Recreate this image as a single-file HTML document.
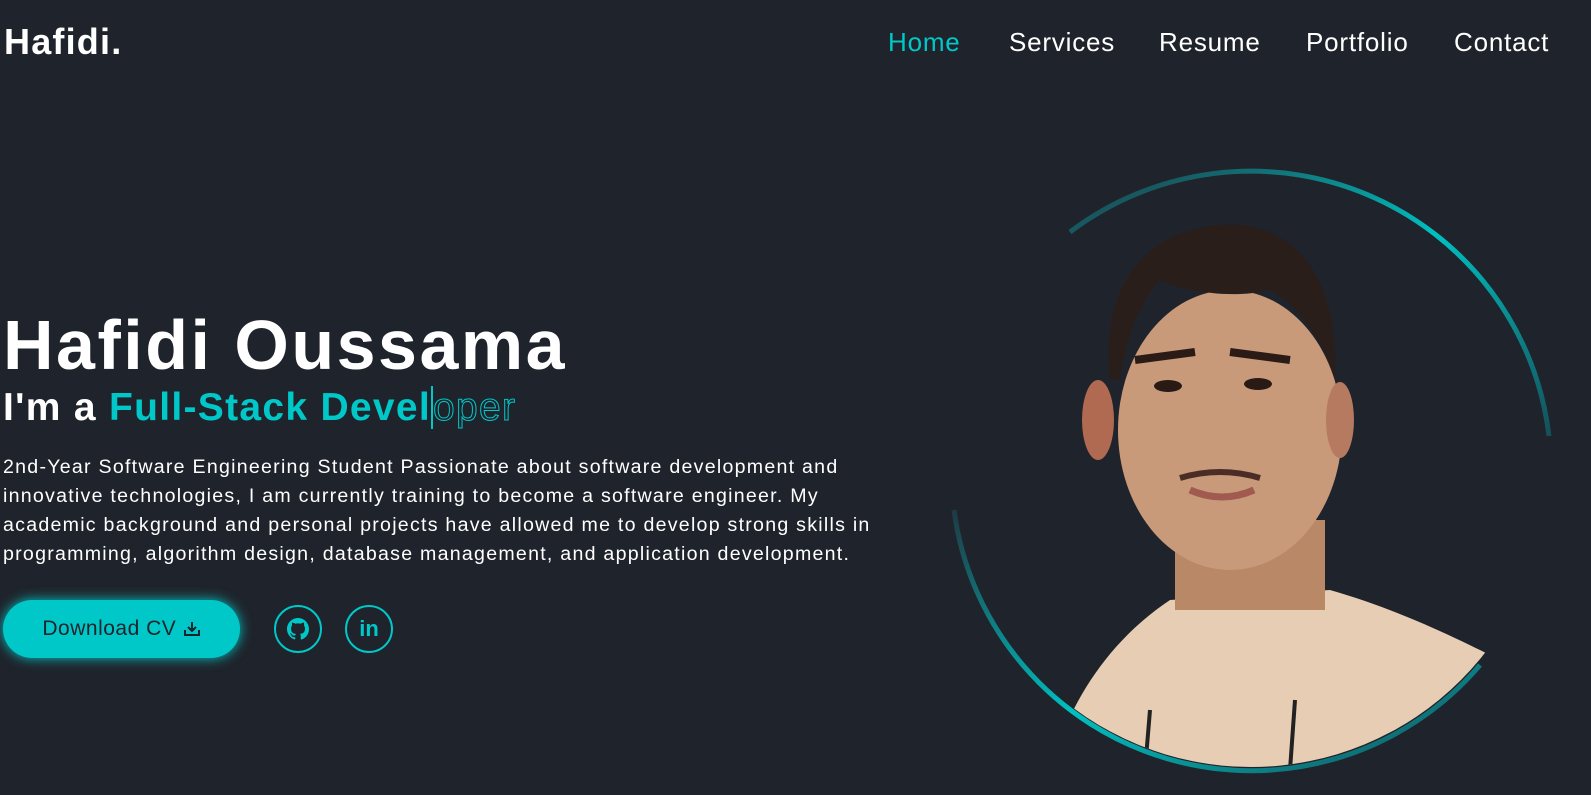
<!DOCTYPE html>
<html><head><meta charset="utf-8"><style>
*{margin:0;padding:0;box-sizing:border-box}
body{width:1591px;height:795px;background:#1f232b;color:#fff;font-family:"Liberation Sans",sans-serif;position:relative;overflow:hidden}
.logo{position:absolute;left:4px;top:21px;font-size:36px;font-weight:bold;letter-spacing:1.2px}
nav a{position:absolute;top:27px;font-size:26px;color:#fff;text-decoration:none;letter-spacing:0.8px}
h1{position:absolute;left:3px;top:305px;font-size:70px;font-weight:bold;letter-spacing:2.5px}
h2{position:absolute;left:3px;top:386px;font-size:39px;font-weight:bold;white-space:nowrap;letter-spacing:1.3px}
h2 .c{color:#00c8c8}
h2 .o{color:transparent;-webkit-text-stroke:1px #00c8c8;font-weight:normal;border-left:2px solid #00c8c8}
p{position:absolute;left:3px;top:453px;font-size:19.6px;line-height:29px;letter-spacing:1.25px;white-space:nowrap}
.btn{position:absolute;left:3px;top:600px;width:237px;height:58px;border-radius:29px;background:#00c8c8;color:#1f232b;font-size:21px;display:flex;align-items:center;justify-content:center;box-shadow:0 0 12px #00c8c8;letter-spacing:0.5px}
.ic{position:absolute;top:605px;width:48px;height:48px;border:2px solid #00c8c8;border-radius:50%;color:#00c8c8;display:flex;align-items:center;justify-content:center;font-weight:bold;font-size:22px}
</style></head><body>
<div class="logo">Hafidi.</div>
<nav><a style="left:888px;color:#00c8c8">Home</a><a style="left:1009px">Services</a><a style="left:1159px">Resume</a><a style="left:1306px">Portfolio</a><a style="left:1454px">Contact</a></nav>
<h1>Hafidi Oussama</h1>
<h2>I'm a <span class="c">Full-Stack Devel</span><span class="o">oper</span></h2>
<p>2nd-Year Software Engineering Student Passionate about software development and<br>innovative technologies, I am currently training to become a software engineer. My<br>academic background and personal projects have allowed me to develop strong skills in<br>programming, algorithm design, database management, and application development.</p>
<div class="btn">Download CV&nbsp;<svg width="18" height="16" viewBox="0 0 18 16" fill="none" stroke="#1f232b" stroke-width="2"><path d="M9 1v9M5 6l4 4 4-4M2 9v5h14V9"/></svg></div>
<div class="ic" style="left:274px"><svg width="22" height="22" viewBox="0 0 16 16" fill="#00c8c8"><path d="M8 0C3.58 0 0 3.58 0 8c0 3.54 2.29 6.53 5.47 7.59.4.07.55-.17.55-.38v-1.33c-2.23.48-2.7-1.07-2.7-1.07-.36-.92-.89-1.17-.89-1.17-.73-.5.06-.49.06-.49.8.06 1.23.83 1.23.83.71 1.22 1.87.87 2.33.66.07-.52.28-.87.51-1.07-1.78-.2-3.64-.89-3.64-3.95 0-.87.31-1.59.82-2.15-.08-.2-.36-1.02.08-2.12 0 0 .67-.21 2.2.82a7.6 7.6 0 0 1 4 0c1.53-1.04 2.2-.82 2.2-.82.44 1.1.16 1.92.08 2.12.51.56.82 1.27.82 2.15 0 3.07-1.87 3.75-3.65 3.95.29.25.54.73.54 1.48v2.2c0 .21.15.46.55.38A8 8 0 0 0 16 8c0-4.42-3.58-8-8-8z"/></svg></div>
<div class="ic" style="left:345px">in</div>
<svg style="position:absolute;left:0;top:0" width="1591" height="795">
<defs>
<linearGradient id="g" x1="0" y1="0" x2="1" y2="1"><stop offset="0" stop-color="#1f3a44"/><stop offset="0.5" stop-color="#00c0c0"/><stop offset="1" stop-color="#15505a"/></linearGradient>
<clipPath id="cp"><circle cx="1251" cy="470" r="297"/><rect x="1050" y="150" width="400" height="330"/></clipPath>
</defs>
<path d="M1070 232 A300 300 0 0 1 1549 436" fill="none" stroke="url(#g)" stroke-width="5"/>
<path d="M954 510 A300 300 0 0 0 1480 665" fill="none" stroke="url(#g)" stroke-width="5"/>
<g clip-path="url(#cp)">
<path d="M1050 770 C1070 700 1110 640 1170 600 L1330 590 C1400 610 1460 640 1500 660 L1500 790 L1040 790Z" fill="#e6cdb4"/>
<path d="M1145 770 L1150 710 M1290 770 L1295 700" stroke="#222" stroke-width="4"/>
<rect x="1175" y="520" width="150" height="90" fill="#b98866"/>
<ellipse cx="1230" cy="430" rx="112" ry="140" fill="#c89a7a"/>
<ellipse cx="1098" cy="420" rx="16" ry="40" fill="#b06a52"/>
<ellipse cx="1340" cy="420" rx="14" ry="38" fill="#b57a60"/>
<path d="M1110 380 C1100 280 1150 230 1220 225 C1290 220 1340 270 1335 380 C1320 330 1290 300 1270 290 C1230 300 1180 290 1160 280 C1140 300 1125 340 1120 380Z" fill="#2a1e1a"/>
<path d="M1135 360 l60 -8 M1230 352 l60 8" stroke="#2b1b17" stroke-width="8"/>
<ellipse cx="1168" cy="386" rx="14" ry="6" fill="#2a1a16"/><ellipse cx="1258" cy="384" rx="14" ry="6" fill="#2a1a16"/>
<path d="M1180 478 q40 -12 80 0" stroke="#4a2e26" stroke-width="6" fill="none"/>
<path d="M1190 490 q32 14 64 0" stroke="#a05a50" stroke-width="7" fill="none"/>
</g>
</svg>
</body></html>
